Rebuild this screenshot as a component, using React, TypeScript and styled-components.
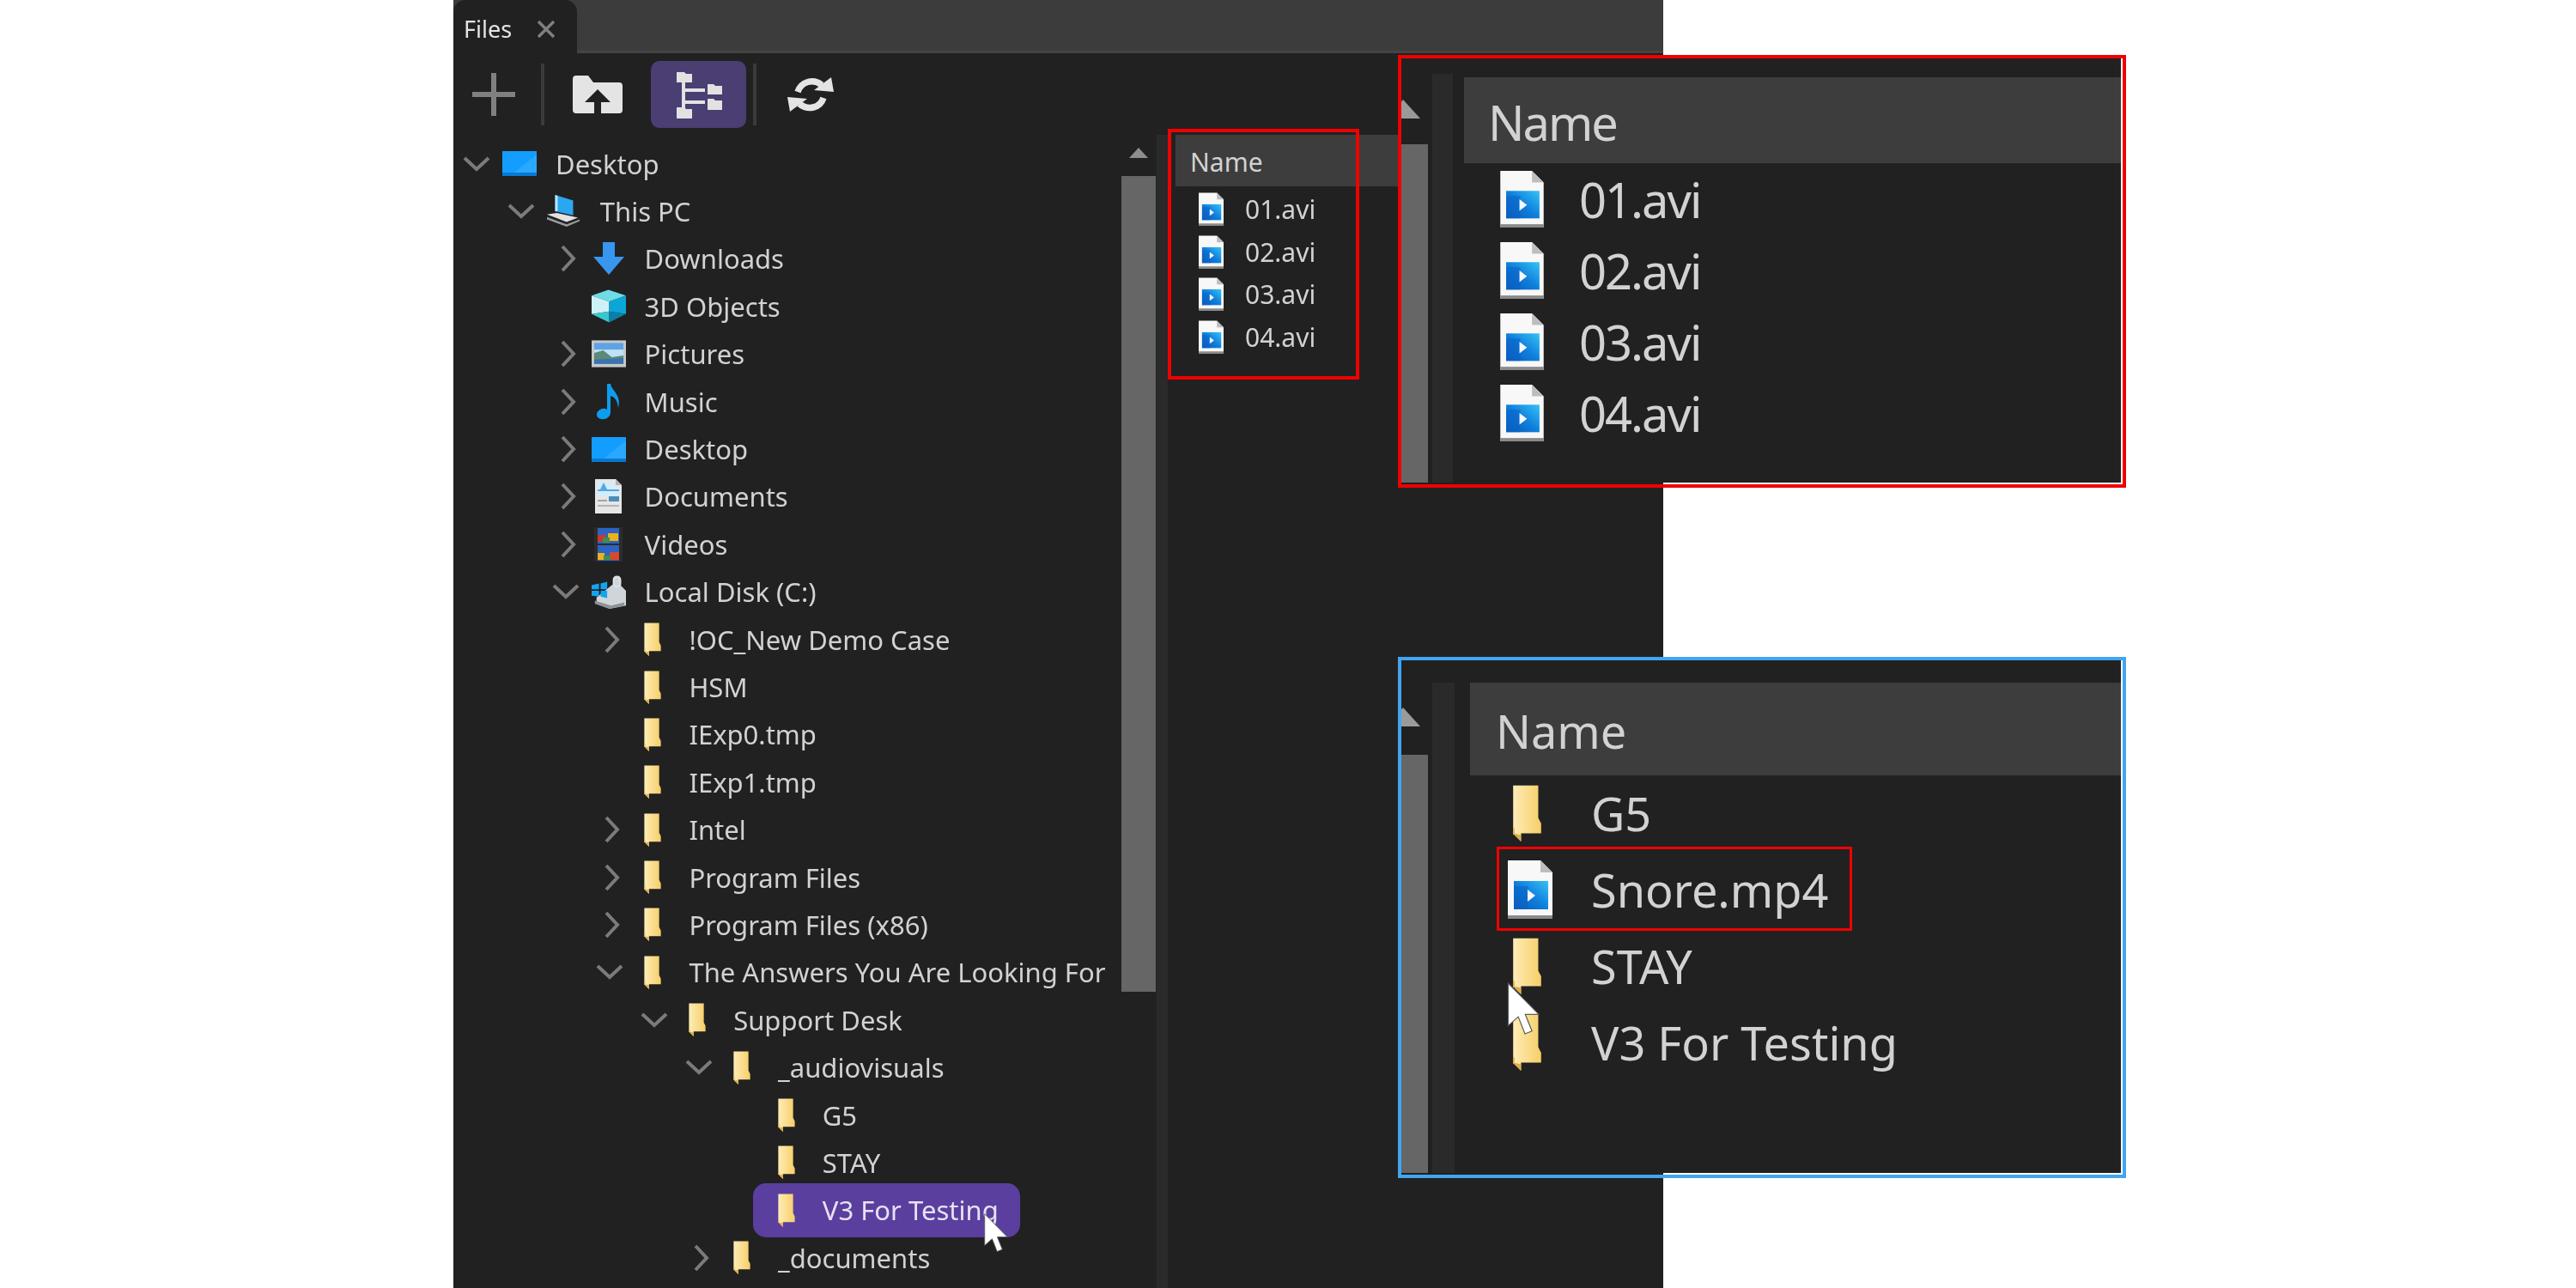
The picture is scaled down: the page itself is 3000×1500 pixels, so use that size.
import React from "react";
import styled, { createGlobalStyle } from "styled-components";

const GlobalStyle = createGlobalStyle`
  html, body {
    margin: 0;
    padding: 0;
    background: #ffffff;
  }
  body {
    font-family: "Noto Sans", "Open Sans", sans-serif;
  }
`;

/* ---------- icons ---------- */

const ChevronDown = () => (
  <svg width="32" height="18" viewBox="0 0 32 18">
    <path d="M2 2 L16 15 L30 2" fill="none" stroke="#7b7b7b" strokeWidth="4" />
  </svg>
);

const ChevronRight = () => (
  <svg width="18" height="32" viewBox="0 0 18 32">
    <path d="M2 2 L15 16 L2 30" fill="none" stroke="#7b7b7b" strokeWidth="4" />
  </svg>
);

const MonitorIcon = () => (
  <svg width="40" height="29" viewBox="0 0 40 29">
    <rect width="40" height="29" fill="#139dff" />
    <path d="M0 29 L0 25 L40 25 L40 29Z" fill="#0a78d0" />
    <path d="M14 25 L40 4 L40 25Z" fill="#2aa8ff" />
  </svg>
);

const LaptopIcon = () => (
  <svg width="42" height="40" viewBox="0 0 42 40">
    <path d="M10 0 L32 7 L32 25 L10 20Z" fill="#2ba7f2" />
    <path d="M10 0 L13 1 L13 20 L10 20Z" fill="#bfe6fb" />
    <path d="M0 24 L12 22 L38 28 L24 33Z" fill="#e2e2e2" />
    <path d="M0 27 L24 36 L40 30 L40 32 L24 39 L0 30Z" fill="#9a9a9a" />
  </svg>
);

const DownloadIcon = () => (
  <svg width="36" height="38" viewBox="0 0 36 38">
    <path d="M11 0 H25 V17 H36 L18 38 L0 17 H11Z" fill="#3796ee" />
  </svg>
);

const CubeIcon = () => (
  <svg width="41" height="39" viewBox="0 0 41 39">
    <path d="M20 0 L41 7 L21 14 L0 7Z" fill="#6fdbe6" />
    <path d="M0 7 L21 14 L21 26 L0 29Z" fill="#cdf1f6" />
    <path d="M41 7 L21 14 L21 26 L41 29Z" fill="#0aa6d6" />
    <path d="M0 29 L21 26 L21 39Z" fill="#38c6cf" />
    <path d="M41 29 L21 26 L21 39Z" fill="#0a7fa8" />
  </svg>
);

const PictureIcon = () => (
  <svg width="41" height="32" viewBox="0 0 41 32">
    <rect width="41" height="32" fill="#c8c8c8" />
    <rect x="3" y="3" width="35" height="25" fill="#bfe0f6" />
    <rect x="3" y="3" width="35" height="8" fill="#5fa3e2" />
    <path d="M3 15 L14 12 L24 20 L38 18 L38 28 L3 28Z" fill="#5d8a78" />
    <path d="M3 23 L38 21 L38 28 L3 28Z" fill="#3a74b0" />
  </svg>
);

const NoteIcon = () => (
  <svg width="30" height="42" viewBox="0 0 30 42">
    <path d="M13 0 H17 C18 8 30 12 26 28 C25 18 21 15 17 14 V33 C17 39 11 42 6 41 C0 40 -1 33 5 30 C8 28 11 29 13 30Z" fill="#0d9df0" />
  </svg>
);

const DocumentIcon = () => (
  <svg width="31" height="40" viewBox="0 0 31 40">
    <path d="M0 0 H24 L31 7 V40 H0Z" fill="#e6e6e6" />
    <path d="M24 0 L31 7 H24Z" fill="#b4b4b4" />
    <path d="M3 3 H22 V8 H28 V20 H3Z" fill="#d5ecfa" />
    <path d="M10 4 L14 12 H6Z" fill="#53a8e6" />
    <rect x="3" y="12" width="25" height="2" fill="#53a8e6" />
    <rect x="16" y="20" width="12" height="6" fill="#4d8db8" />
    <rect x="3" y="24" width="11" height="2" fill="#a5a5a5" />
    <rect x="3" y="30" width="25" height="2" fill="#b5b5b5" />
  </svg>
);

const FilmIcon = () => (
  <svg width="33" height="40" viewBox="0 0 33 40">
    <rect width="33" height="40" fill="#2c2c2c" />
    <rect x="4" y="1" width="25" height="18" fill="#2c63c4" />
    <rect x="4" y="21" width="25" height="18" fill="#2c63c4" />
    <rect x="4" y="9" width="10" height="8" fill="#c8382c" />
    <rect x="16" y="7" width="12" height="9" fill="#e8b21f" />
    <rect x="10" y="12" width="8" height="6" fill="#3f8f4a" />
    <rect x="4" y="30" width="8" height="8" fill="#e8b21f" />
    <rect x="18" y="29" width="11" height="9" fill="#d8482c" />
    <rect x="11" y="33" width="8" height="5" fill="#3f8f4a" />
  </svg>
);

const DiskIcon = () => (
  <svg width="42" height="42" viewBox="0 0 42 42">
    <path d="M26 12 V6 C26 0 36 0 36 6 V14 L42 20 V38 L22 42 L6 36 V28Z" fill="#cfd6da" />
    <rect x="27" y="3" width="8" height="12" rx="4" fill="none" stroke="#dfe3e6" strokeWidth="2" />
    <path d="M0 13 L9 11 V18 H0Z M11 11 L19 9 V18 H11Z M0 20 H9 V27 L0 26Z M11 20 H19 V29 L11 27Z" fill="#12a5ef" />
    <path d="M4 32 L24 38 L40 34 V38 L22 42 L4 36Z" fill="#8d9499" />
  </svg>
);

const FolderIcon: React.FC<{ w?: number; h?: number }> = ({ w = 26, h = 39 }) => (
  <svg width={w} height={h} viewBox="0 0 78 158">
    <defs>
      <linearGradient id="folder-fill" x1="0" x2="1" y1="0" y2="0">
        <stop offset="0" stopColor="#fdedb8" />
        <stop offset="0.5" stopColor="#fbdd8e" />
        <stop offset="1" stopColor="#f5ce68" />
      </linearGradient>
    </defs>
    <path
      d="M0 2 H70 V92 L78 108 V135 H22 V158 L2 138 H0Z"
      fill="url(#folder-fill)"
    />
    <path d="M0 118 L4 122 V136 L22 140 V158 L2 138 H0Z" fill="#e0ad48" />
  </svg>
);

const VideoFileIcon: React.FC<{ w?: number; h?: number }> = ({ w = 29, h = 39 }) => (
  <svg width={w} height={h} viewBox="0 0 52 68">
    <defs>
      <linearGradient id="video-fill" x1="1" x2="0" y1="0" y2="1">
        <stop offset="0" stopColor="#35c3f5" />
        <stop offset="0.5" stopColor="#0f7fdc" />
        <stop offset="1" stopColor="#0a58b8" />
      </linearGradient>
    </defs>
    <path d="M0 0 H38 L52 14 V68 H0Z" fill="#f8f8f8" />
    <path d="M38 0 L52 14 H38Z" fill="#bdbdbd" />
    <rect y="64" width="52" height="4" fill="#8a8a8a" />
    <rect x="7" y="24" width="40" height="33" fill="url(#video-fill)" />
    <path d="M7 30 H24 V57 H7Z" fill="#0a62c6" opacity="0.55" />
    <path d="M23 34 L32 41 L23 48Z" fill="#f4f8fc" />
  </svg>
);

const PlusIcon = () => (
  <svg width="50" height="50" viewBox="0 0 50 50">
    <path d="M25 0 V50 M0 25 H50" stroke="#808080" strokeWidth="6" />
  </svg>
);

const FolderUpIcon = () => (
  <svg width="58" height="44" viewBox="0 0 58 44">
    <path
      d="M0 4 Q0 0 4 0 H18 L24 8 H54 Q58 8 58 12 V40 Q58 44 54 44 H4 Q0 44 0 40Z"
      fill="#e4e4e4"
    />
    <path d="M29 16 L44 31 H33 V44 H25 V31 H14Z" fill="#212121" />
  </svg>
);

const TreeViewIcon = () => (
  <svg width="111" height="78" viewBox="0 0 111 78">
    <g fill="#e2e2e2">
      <path d="M30 13 H39 L41 15 H48 V25 H30Z" />
      <path d="M30 54 H39 L41 56 H48 V67 H30Z" />
      <path d="M66 27 H73 L75 29 H83 V39 H66Z" />
      <path d="M66 44 H73 L75 46 H83 V57 H66Z" />
      <rect x="36" y="25" width="4" height="30" />
      <rect x="40" y="32" width="23" height="4" />
      <rect x="40" y="46" width="23" height="4" />
    </g>
  </svg>
);

const RefreshIcon = () => (
  <svg width="56" height="44" viewBox="0 0 56 44">
    <path d="M13 19 C17 7 31 3 41 11" fill="none" stroke="#e4e4e4" strokeWidth="7.5" />
    <path d="M32 17 L55 19 L52 2Z" fill="#e4e4e4" />
    <path d="M43 26 C39 38 25 41 15 33" fill="none" stroke="#e4e4e4" strokeWidth="7.5" />
    <path d="M24 27 L1 25 L4 42Z" fill="#e4e4e4" />
  </svg>
);

const CursorIcon: React.FC<{ w: number; h: number }> = ({ w, h }) => (
  <svg width={w} height={h} viewBox="0 0 12 19">
    <path
      d="M0.3 0.3 V15.5 L3.9 12.3 L6.3 18.4 L8.8 17.4 L6.4 11.4 H11.2Z"
      fill="#ffffff"
      stroke="#555555"
      strokeWidth="0.35"
    />
  </svg>
);

/* ---------- window ---------- */

const Page = styled.div`
  position: relative;
  width: 3000px;
  height: 1500px;
  overflow: hidden;
  background: #ffffff;
`;

const Win = styled.div`
  display: flex;
  flex-direction: column;
  width: 1409px;
  height: 1500px;
  margin-left: 528px;
  background: #212121;
  color: #d2d2d2;
`;

const TabBar = styled.div`
  display: flex;
  flex: none;
  height: 62px;
  background: #3c3c3c;
  box-shadow: inset 0 -3px 0 #444444;
`;

const Tab = styled.div`
  display: flex;
  align-items: center;
  width: 144px;
  padding: 5px 0 0 12px;
  box-sizing: border-box;
  border-radius: 14px 14px 0 0;
  background: #212121;
  font-size: 27px;
  color: #e4e4e4;
  filter: blur(0.4px);
`;

const TabClose = styled.svg`
  margin-left: 30px;
`;

const Toolbar = styled.div`
  display: flex;
  flex: none;
  align-items: center;
  height: 95px;
  padding-left: 22px;
`;

const ToolSep = styled.div<{ $ml: number }>`
  width: 4px;
  height: 72px;
  margin-left: ${(p) => p.$ml}px;
  background: #3a3a3a;
`;

const ToolIcon = styled.div<{ $ml?: number; $active?: boolean }>`
  display: flex;
  margin-left: ${(p) => p.$ml ?? 0}px;
  border-radius: 10px;
  background: ${(p) => (p.$active ? "#4a3e73" : "transparent")};
`;

const Body = styled.div`
  display: flex;
  flex: 1;
  min-height: 0;
`;

const Tree = styled.div`
  flex: none;
  width: 778px;
  padding-top: 6px;
  box-sizing: border-box;
  overflow: hidden;
  filter: blur(0.4px);
`;

const Row = styled.div<{ $depth: number }>`
  display: flex;
  align-items: center;
  height: 55.4px;
  padding-left: ${(p) => 9 + p.$depth * 51.8}px;
  white-space: nowrap;
`;

const ChevronSlot = styled.div<{ $open?: boolean }>`
  display: flex;
  flex: none;
  justify-content: center;
  width: 46px;
  margin-left: ${(p) => (p.$open ? -5 : -2)}px;
  margin-right: ${(p) => (p.$open ? -12 : -15)}px;
`;

const RowItem = styled.div<{ $selected?: boolean }>`
  display: flex;
  flex: none;
  align-items: center;
  height: 63px;
  padding: 0 25px 0 19px;
  border-radius: 15px;
  background: ${(p) => (p.$selected ? "#5a3f9f" : "transparent")};
  font-size: 31px;
  color: ${(p) => (p.$selected ? "#e6e2f2" : "#d2d2d2")};
`;

const IconSlot = styled.div`
  display: flex;
  flex: none;
  justify-content: center;
  width: 40px;
  margin-right: 22px;
`;

const TreeScroll = styled.div`
  display: flex;
  flex: none;
  flex-direction: column;
  align-items: center;
  width: 40px;
  padding-top: 15px;
`;

const UpArrow = styled.div`
  width: 0;
  height: 0;
  border-left: 11px solid transparent;
  border-right: 11px solid transparent;
  border-bottom: 12px solid #8e8e8e;
`;

const TreeThumb = styled.div`
  width: 40px;
  height: 950px;
  margin-top: 21px;
  background: #666666;
`;

const ListTrack = styled.div`
  flex: none;
  width: 13px;
  margin: 0 9px 0 1px;
  background: #2a2a2a;
`;

const ListPane = styled.div`
  flex: 1;
  min-width: 0;
`;

const ListHeader = styled.div`
  display: flex;
  align-items: center;
  height: 60px;
  padding: 3px 0 0 17px;
  box-sizing: border-box;
  background: #3d3d3d;
  font-size: 30px;
  color: #d2d2d2;
`;

const FileRow = styled.div`
  display: flex;
  align-items: center;
  height: 49.7px;
  padding: 3px 0 0 27px;
  box-sizing: border-box;
  font-size: 30px;
  filter: blur(0.4px);
`;

const FileName = styled.span`
  margin-left: 25px;
`;

/* ---------- zoomed callouts ---------- */

const Callout = styled.div<{ $top: number; $height: number; $color: string }>`
  position: absolute;
  left: 1628px;
  top: ${(p) => p.$top}px;
  display: flex;
  width: 848px;
  height: ${(p) => p.$height}px;
  box-sizing: border-box;
  border: 4px solid ${(p) => p.$color};
`;

const CalloutInner = styled.div`
  display: flex;
  flex: 1;
  min-width: 0;
  margin: 0 2px 2px 0;
  overflow: hidden;
  background: #212121;
`;

const CalloutScroll = styled.div`
  position: relative;
  flex: none;
  width: 36px;
`;

const ClippedArrow = styled.div<{ $top: number }>`
  position: absolute;
  left: -18px;
  top: ${(p) => p.$top}px;
  width: 0;
  height: 0;
  border-left: 20px solid transparent;
  border-right: 20px solid transparent;
  border-bottom: 22px solid #9a9a9a;
`;

const CalloutThumb = styled.div<{ $top: number }>`
  position: absolute;
  left: 0;
  right: 5px;
  top: ${(p) => p.$top}px;
  bottom: 0;
  background: #666666;
`;

const CalloutTrack = styled.div<{ $top: number; $width: number; $mr: number }>`
  flex: none;
  width: ${(p) => p.$width}px;
  margin: ${(p) => p.$top}px ${(p) => p.$mr}px 0 0;
  background: #2a2a2a;
`;

const CalloutList = styled.div<{ $top: number }>`
  flex: 1;
  min-width: 0;
  padding-top: ${(p) => p.$top}px;
  filter: blur(0.6px);
`;

const BigHeader = styled.div<{ $height: number; $size: number; $pad: number; $ls: number }>`
  display: flex;
  align-items: center;
  height: ${(p) => p.$height}px;
  padding: 3px 0 0 ${(p) => p.$pad}px;
  box-sizing: border-box;
  background: #3d3d3d;
  font-size: ${(p) => p.$size}px;
  letter-spacing: ${(p) => p.$ls}px;
  color: #d2d2d2;
`;

const BigRow = styled.div<{ $height: number; $size: number; $pad: number; $ls: number }>`
  display: flex;
  align-items: center;
  height: ${(p) => p.$height}px;
  padding-left: ${(p) => p.$pad}px;
  font-size: ${(p) => p.$size}px;
  letter-spacing: ${(p) => p.$ls}px;
  color: #d2d2d2;
`;

const BigIconSlot = styled.div<{ $width: number }>`
  display: flex;
  flex: none;
  width: ${(p) => p.$width}px;
`;

const Frame = styled.div<{ $left: number; $top: number; $width: number; $height: number; $size: number }>`
  position: absolute;
  left: ${(p) => p.$left}px;
  top: ${(p) => p.$top}px;
  width: ${(p) => p.$width}px;
  height: ${(p) => p.$height}px;
  box-sizing: border-box;
  border: ${(p) => p.$size}px solid #f00000;
`;

const CursorMark = styled.div<{ $left: number; $top: number }>`
  position: absolute;
  left: ${(p) => p.$left}px;
  top: ${(p) => p.$top}px;
  display: flex;
`;

/* ---------- data ---------- */

type TreeNode = {
  label: string;
  depth: number;
  open?: boolean;
  closed?: boolean;
  icon?: React.ReactNode;
  selected?: boolean;
};

const treeNodes: TreeNode[] = [
  { label: "Desktop", depth: 0, open: true, icon: <MonitorIcon /> },
  { label: "This PC", depth: 1, open: true, icon: <LaptopIcon /> },
  { label: "Downloads", depth: 2, closed: true, icon: <DownloadIcon /> },
  { label: "3D Objects", depth: 2, icon: <CubeIcon /> },
  { label: "Pictures", depth: 2, closed: true, icon: <PictureIcon /> },
  { label: "Music", depth: 2, closed: true, icon: <NoteIcon /> },
  { label: "Desktop", depth: 2, closed: true, icon: <MonitorIcon /> },
  { label: "Documents", depth: 2, closed: true, icon: <DocumentIcon /> },
  { label: "Videos", depth: 2, closed: true, icon: <FilmIcon /> },
  { label: "Local Disk (C:)", depth: 2, open: true, icon: <DiskIcon /> },
  { label: "!OC_New Demo Case", depth: 3, closed: true },
  { label: "HSM", depth: 3 },
  { label: "IExp0.tmp", depth: 3 },
  { label: "IExp1.tmp", depth: 3 },
  { label: "Intel", depth: 3, closed: true },
  { label: "Program Files", depth: 3, closed: true },
  { label: "Program Files (x86)", depth: 3, closed: true },
  { label: "The Answers You Are Looking For", depth: 3, open: true },
  { label: "Support Desk", depth: 4, open: true },
  { label: "_audiovisuals", depth: 5, open: true },
  { label: "G5", depth: 6 },
  { label: "STAY", depth: 6 },
  { label: "V3 For Testing", depth: 6, selected: true },
  { label: "_documents", depth: 5, closed: true },
];

const aviFiles = ["01.avi", "02.avi", "03.avi", "04.avi"];

const App: React.FC = () => {
  return (
    <Page>
      <GlobalStyle />
      <Win>
        <TabBar>
          <Tab>
            Files
            <TabClose width="20" height="20" viewBox="0 0 20 20">
              <path d="M1 1 L19 19 M19 1 L1 19" stroke="#7f7f7f" strokeWidth="3.5" />
            </TabClose>
          </Tab>
        </TabBar>
        <Toolbar>
          <ToolIcon>
            <PlusIcon />
          </ToolIcon>
          <ToolSep $ml={30} />
          <ToolIcon $ml={33}>
            <FolderUpIcon />
          </ToolIcon>
          <ToolIcon $ml={33} $active>
            <TreeViewIcon />
          </ToolIcon>
          <ToolSep $ml={8} />
          <ToolIcon $ml={35}>
            <RefreshIcon />
          </ToolIcon>
        </Toolbar>
        <Body>
          <Tree>
            {treeNodes.map((node, i) => (
              <Row key={i} $depth={node.depth}>
                <ChevronSlot $open={node.open}>
                  {node.open && <ChevronDown />}
                  {node.closed && <ChevronRight />}
                </ChevronSlot>
                <RowItem $selected={node.selected}>
                  <IconSlot>{node.icon ?? <FolderIcon />}</IconSlot>
                  {node.label}
                </RowItem>
              </Row>
            ))}
          </Tree>
          <TreeScroll>
            <UpArrow />
            <TreeThumb />
          </TreeScroll>
          <ListTrack />
          <ListPane>
            <ListHeader>Name</ListHeader>
            {aviFiles.map((name) => (
              <FileRow key={name}>
                <VideoFileIcon />
                <FileName>{name}</FileName>
              </FileRow>
            ))}
          </ListPane>
        </Body>
      </Win>

      <Frame $left={1360} $top={150} $width={223} $height={292} $size={4} />

      <Callout $top={64} $height={504} $color="#f00000">
        <CalloutInner>
          <CalloutScroll>
            <ClippedArrow $top={48} />
            <CalloutThumb $top={100} />
          </CalloutScroll>
          <CalloutTrack $top={18} $width={24} $mr={13} />
          <CalloutList $top={22}>
            <BigHeader $height={100} $size={56} $pad={28} $ls={-2}>
              Name
            </BigHeader>
            {aviFiles.map((name) => (
              <BigRow key={name} $height={83} $size={56} $pad={42} $ls={-2}>
                <BigIconSlot $width={92}>
                  <VideoFileIcon w={51} h={66} />
                </BigIconSlot>
                {name}
              </BigRow>
            ))}
          </CalloutList>
        </CalloutInner>
      </Callout>

      <Callout $top={765} $height={607} $color="#42a5f0">
        <CalloutInner>
          <CalloutScroll>
            <ClippedArrow $top={55} />
            <CalloutThumb $top={110} />
          </CalloutScroll>
          <CalloutTrack $top={26} $width={26} $mr={18} />
          <CalloutList $top={26}>
            <BigHeader $height={108} $size={54} $pad={30} $ls={0}>
              Name
            </BigHeader>
            <BigRow $height={88} $size={54} $pad={44} $ls={0}>
              <BigIconSlot $width={97}>
                <FolderIcon w={45} h={66} />
              </BigIconSlot>
              G5
            </BigRow>
            <BigRow $height={89} $size={54} $pad={44} $ls={0}>
              <BigIconSlot $width={97}>
                <VideoFileIcon w={52} h={68} />
              </BigIconSlot>
              Snore.mp4
            </BigRow>
            <BigRow $height={89} $size={54} $pad={44} $ls={0}>
              <BigIconSlot $width={97}>
                <FolderIcon w={45} h={66} />
              </BigIconSlot>
              STAY
            </BigRow>
            <BigRow $height={89} $size={54} $pad={44} $ls={0}>
              <BigIconSlot $width={97}>
                <FolderIcon w={45} h={66} />
              </BigIconSlot>
              V3 For Testing
            </BigRow>
          </CalloutList>
        </CalloutInner>
      </Callout>

      <Frame $left={1743} $top={986} $width={414} $height={98} $size={3} />

      <CursorMark $left={1146} $top={1412}>
        <CursorIcon w={29} h={48} />
      </CursorMark>
      <CursorMark $left={1755} $top={1144}>
        <CursorIcon w={40} h={62} />
      </CursorMark>
    </Page>
  );
};

export default App;
